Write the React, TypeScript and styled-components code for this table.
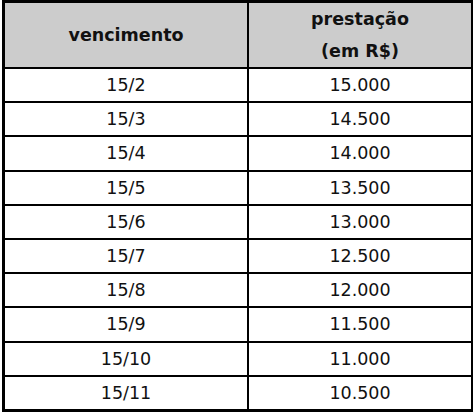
import React from 'react';
import styled, { createGlobalStyle } from 'styled-components';

const GlobalStyle = createGlobalStyle`
  body {
    margin: 0;
    background: #ffffff;
    font-family: "DejaVu Sans", Verdana, sans-serif;
    color: #111111;
  }
`;

const Wrapper = styled.div`
  padding: 0 2px;
`;

const Table = styled.table`
  width: 466px;
  border-collapse: collapse;
  table-layout: fixed;
  border: 3px solid #000;
`;

const HeadCell = styled.th<{ $width: number }>`
  width: ${(p) => p.$width}px;
  height: 64px;
  padding: 0;
  background: #cccccc;
  border: 2px solid #000;
  font-size: 17.5px;
  font-weight: 700;
  line-height: 32px;
  text-align: center;
  vertical-align: middle;
`;

const Cell = styled.td`
  height: 32.2px;
  padding: 0;
  border: 2px solid #000;
  font-size: 17.5px;
  line-height: 32px;
  text-align: center;
`;

const rows: [string, string][] = [
  ['15/2', '15.000'],
  ['15/3', '14.500'],
  ['15/4', '14.000'],
  ['15/5', '13.500'],
  ['15/6', '13.000'],
  ['15/7', '12.500'],
  ['15/8', '12.000'],
  ['15/9', '11.500'],
  ['15/10', '11.000'],
  ['15/11', '10.500'],
];

const App: React.FC = () => {
  return (
    <Wrapper>
      <GlobalStyle />
      <Table>
        <thead>
          <tr>
            <HeadCell $width={242}>vencimento</HeadCell>
            <HeadCell $width={222}>
              prestação
              <br />
              (em R$)
            </HeadCell>
          </tr>
        </thead>
        <tbody>
          {rows.map(([date, value]) => (
            <tr key={date}>
              <Cell>{date}</Cell>
              <Cell>{value}</Cell>
            </tr>
          ))}
        </tbody>
      </Table>
    </Wrapper>
  );
};

export default App;
